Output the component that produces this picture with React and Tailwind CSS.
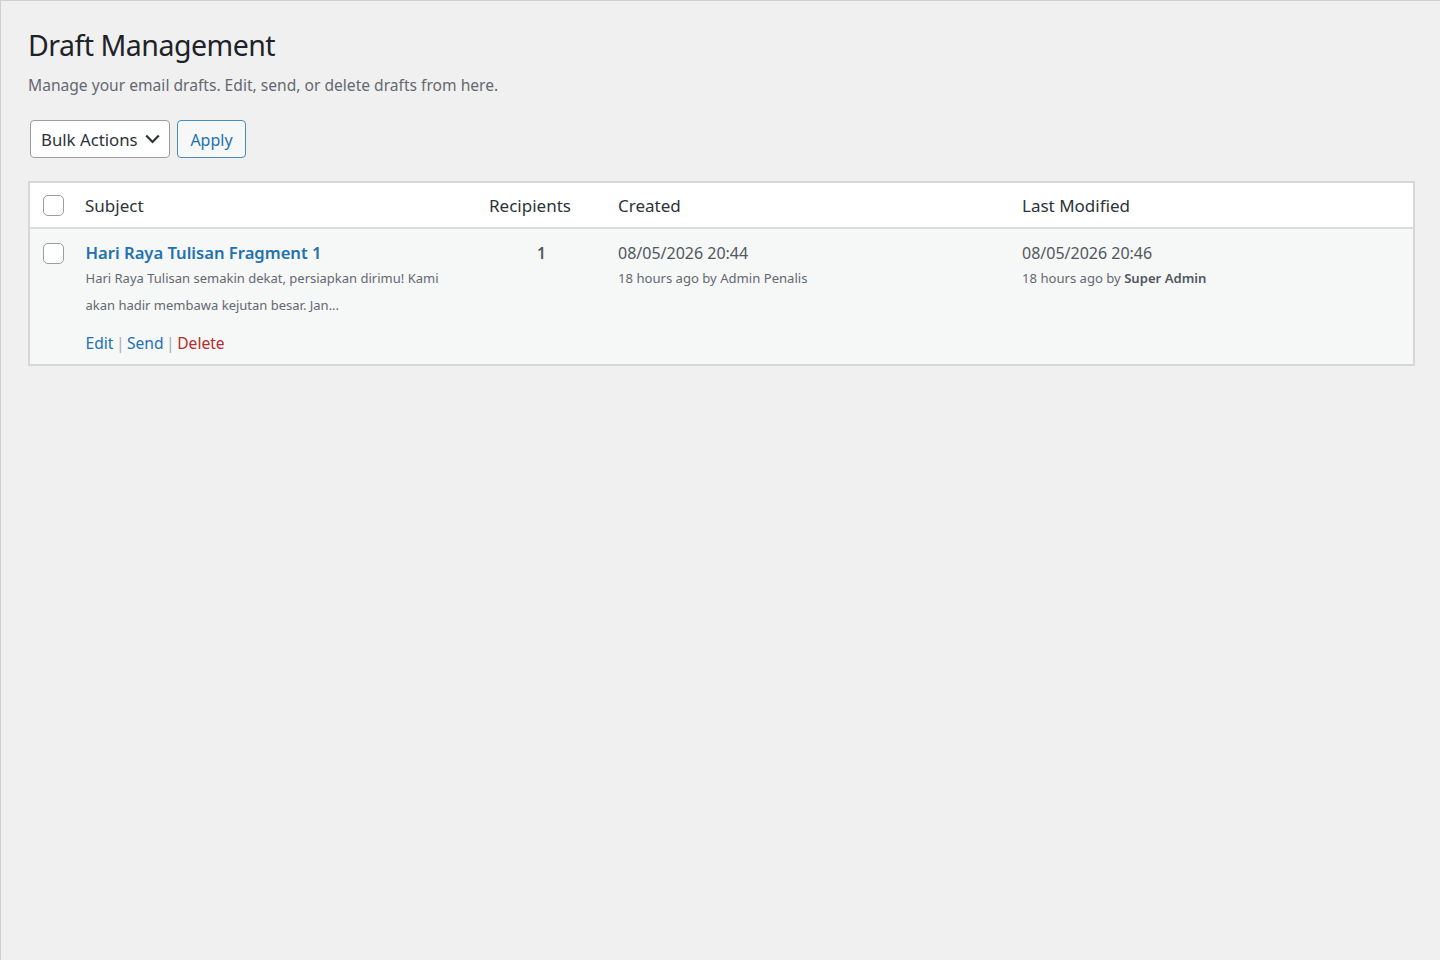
import React from "react";

const Box = () => (
  <span className="block w-[21px] h-[21px] rounded-[5px] border border-[#9a9da1] bg-white" />
);

export default function App() {
  return (
    <div className="min-h-[960px] bg-[#f0f0f1] border-t border-l border-[#cfcfcf] pl-[27px] pr-[25px] font-['Noto_Sans','Open_Sans',sans-serif] text-[#3c434a]">
      <h1 className="pt-[24px] text-[28.5px] leading-[40px] tracking-[-0.5px] text-[#1d2327]">Draft Management</h1>
      <p className="mt-[9px] text-[15.6px] leading-[22px] text-[#646970]">
        Manage your email drafts. Edit, send, or delete drafts from here.
      </p>
      <div className="mt-[24px] flex items-center gap-[7px] pl-[2px]">
        <div className="flex h-[38px] w-[140px] items-center justify-between rounded-[4px] border border-[#9a9da1] bg-white pl-[10px] pr-[9px] pt-[1px] text-[16.8px] text-[#2c3338]">
          <span>Bulk Actions</span>
          <svg width="15" height="10" viewBox="0 0 15 10" fill="none" stroke="#2c3338" strokeWidth="2.2" className="-mt-[2px]">
            <path d="M1.2 1.5 7.5 8 13.8 1.5" />
          </svg>
        </div>
        <div className="flex h-[38px] w-[69px] items-center justify-center rounded-[4px] border border-[#4b8cc0] bg-[#f6f7f7] pt-[1px] text-[16px] text-[#2271b1]">
          Apply
        </div>
      </div>
      <div className="mt-[23px] border-2 border-[#d6d7d9] w-[1387px]">
        <div className="grid h-[46px] grid-cols-[55px_404px_129px_404px_1fr] border-b-2 border-[#dcdcde] bg-white text-[17px] text-[#2c3338]">
          <div className="pl-[13px] pt-[12px]"><Box /></div>
          <div className="pt-[11px] leading-[24px]">Subject</div>
          <div className="pt-[11px] leading-[24px]">Recipients</div>
          <div className="pt-[11px] leading-[24px]">Created</div>
          <div className="pt-[11px] leading-[24px]">Last Modified</div>
        </div>
        <div className="grid h-[135px] grid-cols-[55px_404px_129px_404px_1fr] bg-[#f6f7f7] text-[#50575e]">
          <div className="pl-[13px] pt-[14px]"><Box /></div>
          <div className="pt-[12px]">
            <a className="block pl-[0.5px] text-[16.6px] font-semibold leading-[24px] text-[#2271b1]">Hari Raya Tulisan Fragment 1</a>
            <p className="w-[360px] pl-[0.5px] text-[13px] leading-[27px] text-[#646970]">
              Hari Raya Tulisan semakin dekat, persiapkan dirimu! Kami akan hadir membawa kejutan besar. Jan...
            </p>
            <div className="mt-[12px] flex pl-[0.5px] text-[15.6px] leading-[24px] text-[#a7aaad]">
              <a className="text-[#2271b1]">Edit</a>
              <span className="mx-[2.5px]">|</span>
              <a className="text-[#2271b1]">Send</a>
              <span className="mx-[2.5px]">|</span>
              <a className="text-[#b32d2e]">Delete</a>
            </div>
          </div>
          <div className="pt-[12px] pl-[48px] text-[15.5px] font-semibold leading-[24px]">1</div>
          <div className="pt-[12px]">
            <div className="text-[16px] leading-[24px]">08/05/2026 20:44</div>
            <div className="text-[13.1px] leading-[27px] text-[#646970]">18 hours ago by Admin Penalis</div>
          </div>
          <div className="pt-[12px]">
            <div className="text-[16px] leading-[24px]">08/05/2026 20:46</div>
            <div className="text-[13.1px] leading-[27px] text-[#646970]">
              18 hours ago by <strong className="font-semibold text-[#50575e]">Super Admin</strong>
            </div>
          </div>
        </div>
      </div>
    </div>
  );
}
